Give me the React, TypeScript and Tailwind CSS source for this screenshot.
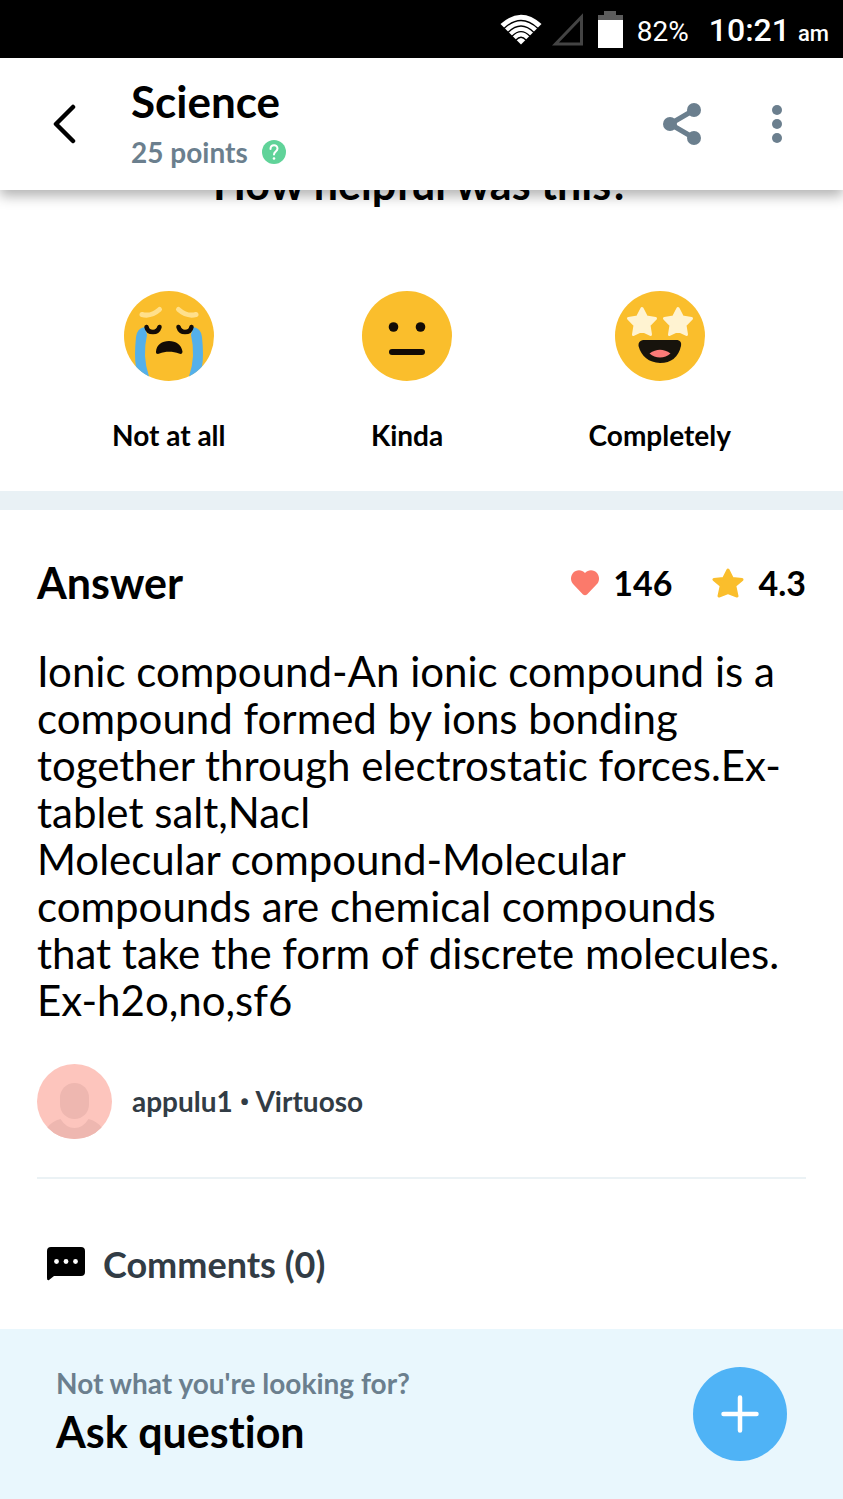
import type { ReactNode } from "react";

function WifiIcon() {
  return (
    <svg viewBox="0 0 42 31" className="h-[31px] w-[42px]" aria-hidden="true">
      <path d="M0.5 10Q21-8.500 41.500 10L21 30.500Z" fill="#fff" />
      <g fill="none" stroke="#000" strokeWidth="1.300">
        <path d="M4 14.500Q21-1.500 38 14.500" />
        <path d="M8 18.500Q21 5.500 34 18.500" />
        <path d="M12 22.200Q21 13 30 22.200" />
        <path d="M16 26Q21 20.500 26 26" />
      </g>
    </svg>
  );
}

function SignalIcon() {
  return (
    <svg viewBox="0 0 32 33" className="h-[33px] w-8" aria-hidden="true">
      <path d="M29.500 4V31H3.500Z" fill="none" stroke="#444" strokeWidth="3" />
    </svg>
  );
}

function BatteryIcon() {
  return (
    <svg viewBox="0 0 25 37" className="h-[37px] w-[25px]" aria-hidden="true">
      <path d="M6 0H18V4H25V10H0V4H6Z" fill="#5c5c5c" />
      <path d="M0 9H25V37H0Z" fill="#fff" />
    </svg>
  );
}

function ShareIcon() {
  return (
    <svg viewBox="0 0 40 44" className="h-11 w-10" fill="#6b7f8e" aria-hidden="true">
      <path d="M32 8L8 22L32 36" fill="none" stroke="#6b7f8e" strokeWidth="5" />
      <circle cx="32" cy="8" r="7" />
      <circle cx="8" cy="22" r="7" />
      <circle cx="32" cy="36" r="7" />
    </svg>
  );
}

function Face({ children }: { children: ReactNode }) {
  return (
    <svg viewBox="0 0 90 90" className="size-[90px]" aria-hidden="true">
      <circle cx="45" cy="45" r="45" fill="#fabe2c" />
      {children}
    </svg>
  );
}

function CryingFace() {
  return (
    <Face>
      <path d="M21 36Q13 37 12 46Q10 66 12 75.500Q17 81.500 25 85.500Q18 65 23 44Z" fill="#54b0ea" />
      <path d="M69 36Q77 37 78 46Q80 66 78 75.500Q73 81.500 65 85.500Q72 65 67 44Z" fill="#54b0ea" />
      <g fill="none" strokeLinecap="round">
        <path d="M18 23.500Q27 26 35.500 18.500M54.500 18.500Q63 26 72 23.500" stroke="#ffe08c" strokeWidth="5" />
        <path d="M22.500 36Q23.500 41 29 41Q34 41 35.500 36M54.500 36Q56 41 61 41Q66.500 41 67.500 36" stroke="#120b06" strokeWidth="4.500" />
      </g>
      <path d="M32 60.500C32.500 54 38 50 45 50S57.500 54 58.500 60.500C58.500 63 56.500 63.500 55 62.500C49 60 41 60 35.500 62.500C34 63.500 31.500 63 32 60.500Z" fill="#120b06" />
    </Face>
  );
}

function NeutralFace() {
  return (
    <Face>
      <circle cx="31.500" cy="36" r="4.800" fill="#120b06" />
      <circle cx="58.500" cy="36" r="4.800" fill="#120b06" />
      <rect x="27" y="58" width="36" height="6" rx="3" fill="#120b06" />
    </Face>
  );
}

const STAR = "M0-13.500L4.400-5L13.500-3.600L7 3.200L8.500 12.500L0 8.500L-8.500 12.500L-7 3.200L-13.500-3.600L-4.400-5Z";

function StarStruckFace() {
  return (
    <Face>
      <g fill="#fff3d1" stroke="#fff3d1" strokeWidth="3" strokeLinejoin="round">
        <path d={STAR} transform="translate(27 31)" />
        <path d={STAR} transform="translate(63 31)" />
      </g>
      <path d="M28 49H62.500Q67 50 66 55Q62 72 45 72Q28 71 23.500 55Q23 50 28 49Z" fill="#17130c" />
      <path d="M34.500 62.500Q45 55 55.500 62.500Q51 66.500 45 66.500Q39 66.500 34.500 62.500Z" fill="#fb7a78" />
    </Face>
  );
}

function HeartIcon() {
  return (
    <svg viewBox="0 0 28 26" className="h-[26px] w-7" aria-hidden="true">
      <path d="M14 3C17.500-1 23-.5 26 3C29 7 28.500 11.500 25.500 14.500L16 24.500Q14 26 12 24.500L2.500 14.500C-.5 11.500-1 7 2 3C5-.5 10.500-1 14 3Z" fill="#fb7a6b" />
    </svg>
  );
}

function StarIcon() {
  return (
    <svg viewBox="0 0 32 32" className="size-8" aria-hidden="true">
      <path d="M16 3L20.300 11.500L30 12.500L22.800 18.700L25 29L16 25.500L7 29L9.200 18.700L2 12.500L11.700 11.500Z" fill="#fabe2c" stroke="#fabe2c" strokeWidth="3" strokeLinejoin="round" />
    </svg>
  );
}

function Avatar() {
  return (
    <svg viewBox="0 0 75 75" className="size-[75px]" aria-hidden="true">
      <circle cx="37.500" cy="37.500" r="37.500" fill="#fdc5bd" />
      <rect x="23" y="19" width="29" height="36" rx="14.500" fill="#eeb7b0" />
      <path d="M10.500 63.500Q15 57 23.500 55Q29 64 37.500 64T51.500 55Q60 57 64.500 63.500Q53.500 75 37.500 75T10.500 63.500Z" fill="#eeb7b0" />
    </svg>
  );
}

function CommentIcon() {
  return (
    <svg viewBox="0 0 38 34" className="h-[34px] w-[38px]" aria-hidden="true">
      <path d="M4 0H34Q38 0 38 4V25Q38 29 34 29H7L2 33Q0 34 0 31V4Q0 0 4 0Z" fill="#000" />
      <circle cx="9.500" cy="14.500" r="2.400" fill="#fff" />
      <circle cx="19" cy="14.500" r="2.400" fill="#fff" />
      <circle cx="28.500" cy="14.500" r="2.400" fill="#fff" />
    </svg>
  );
}

const ratings = [
  { label: "Not at all", face: <CryingFace /> },
  { label: "Kinda", face: <NeutralFace /> },
  { label: "Completely", face: <StarStruckFace /> },
];

export default function App() {
  return (
    <div className="flex min-h-screen flex-col bg-white font-['Lato',sans-serif] text-black [font-variant-ligatures:none]">
      <div className="flex h-[58px] items-center justify-end bg-black pr-3.5 font-['Roboto',sans-serif] text-white">
        <WifiIcon />
        <span className="ml-2.5"><SignalIcon /></span>
        <span className="ml-3.5"><BatteryIcon /></span>
        <div className="ml-3.5 flex items-baseline pt-1.5 leading-9">
          <span className="text-[28px]">82%</span>
          <span className="ml-5 text-[32px] font-medium">10:21</span>
          <span className="ml-2 text-[22px] font-medium">am</span>
        </div>
      </div>

      <header className="relative z-10 flex h-[132px] items-center bg-white pr-[60px] pl-[52px] shadow-[0_6px_12px_rgba(0,0,0,0.3)]">
        <button type="button" aria-label="Back" className="w-[79px]">
          <svg viewBox="0 0 24 40" className="h-10 w-6" aria-hidden="true">
            <path d="M21 3L4 20L21 37" fill="none" stroke="#000" strokeWidth="4.500" strokeLinecap="round" strokeLinejoin="round" />
          </svg>
        </button>
        <div className="flex-1 pb-1">
          <h1 className="text-[44px] leading-[50px] font-bold">Science</h1>
          <p className="mt-2.5 flex items-center gap-3.5 text-[28px] leading-8 font-bold text-[#6b7f8e]">
            25 points
            <svg viewBox="0 0 24 24" className="size-6" aria-hidden="true">
              <circle cx="12" cy="12" r="12" fill="#60d399" />
              <path d="M8.500 9C8.500 4 15.500 4 15.500 8.500C15.500 11.500 12 11.500 12 14.500" fill="none" stroke="#fff" strokeWidth="2" strokeLinecap="round" />
              <circle cx="12" cy="18.500" r="1.300" fill="#fff" />
            </svg>
          </p>
        </div>
        <button type="button" aria-label="Share"><ShareIcon /></button>
        <button type="button" aria-label="More options" className="ml-[69px]">
          <svg viewBox="0 0 12 40" className="h-10 w-3" fill="#6b7f8e" aria-hidden="true">
            <circle cx="6" cy="6" r="5" />
            <circle cx="6" cy="20" r="5" />
            <circle cx="6" cy="34" r="5" />
          </svg>
        </button>
      </header>

      <main className="flex-1">
        <section className="-mt-[31px] border-b-[19px] border-[#e9f1f5] pb-[38px]">
          <h2 className="text-center text-[43px] leading-[50px] font-bold">How helpful was this?</h2>
          <div className="mt-[82px] flex justify-between px-28">
            {ratings.map((rating) => (
              <button key={rating.label} type="button" className="flex flex-col items-center gap-9 text-[28px] leading-9 font-bold">
                {rating.face}
                {rating.label}
              </button>
            ))}
          </div>
        </section>

        <article className="px-[37px]">
          <div className="flex items-center pt-12">
            <h2 className="flex-1 text-[43px] leading-[50px] font-bold">Answer</h2>
            <div className="flex items-center gap-3.5 text-[34px] leading-10 font-bold">
              <HeartIcon />
              146
            </div>
            <div className="ml-10 flex items-center gap-3.5 text-[34px] leading-10 font-bold">
              <StarIcon />
              4.3
            </div>
          </div>
          <p className="mt-10 text-[42px] leading-[47px]">
            Ionic compound-An ionic compound is a<br />
            compound formed by ions bonding<br />
            together through electrostatic forces.Ex-<br />
            tablet salt,Nacl<br />
            Molecular compound-Molecular<br />
            compounds are chemical compounds<br />
            that take the form of discrete molecules.<br />
            Ex-h2o,no,sf6
          </p>
          <div className="flex items-center gap-5 border-b-2 border-[#ebf2f5] pt-10 pb-[38px] text-[28px] leading-8 font-bold text-[#323c45]">
            <Avatar />
            <span>appulu1 <span className="font-['Roboto',sans-serif] text-[28px]">•</span> Virtuoso</span>
          </div>
          <h3 className="flex items-center gap-[18px] px-2.5 pt-[60px] pb-10 text-[36px] leading-[50px] font-bold text-[#323c45]">
            <CommentIcon />
            Comments (0)
          </h3>
        </article>
      </main>

      <footer className="flex items-center justify-between bg-[#e9f7fd] px-14 py-[38px]">
        <div className="pb-1">
          <p className="text-[28px] leading-8 font-bold text-[#6b7f8e]">Not what you're looking for?</p>
          <p className="mt-2 text-[43px] leading-[50px] font-bold">Ask question</p>
        </div>
        <button type="button" aria-label="Ask question" className="flex size-[94px] items-center justify-center rounded-full bg-[#4fb3f6]">
          <svg viewBox="0 0 38 38" className="size-[38px]" aria-hidden="true">
            <path d="M19 2.500V35.500M2.500 19H35.500" stroke="#fff" strokeWidth="4.500" strokeLinecap="round" />
          </svg>
        </button>
      </footer>
    </div>
  );
}
